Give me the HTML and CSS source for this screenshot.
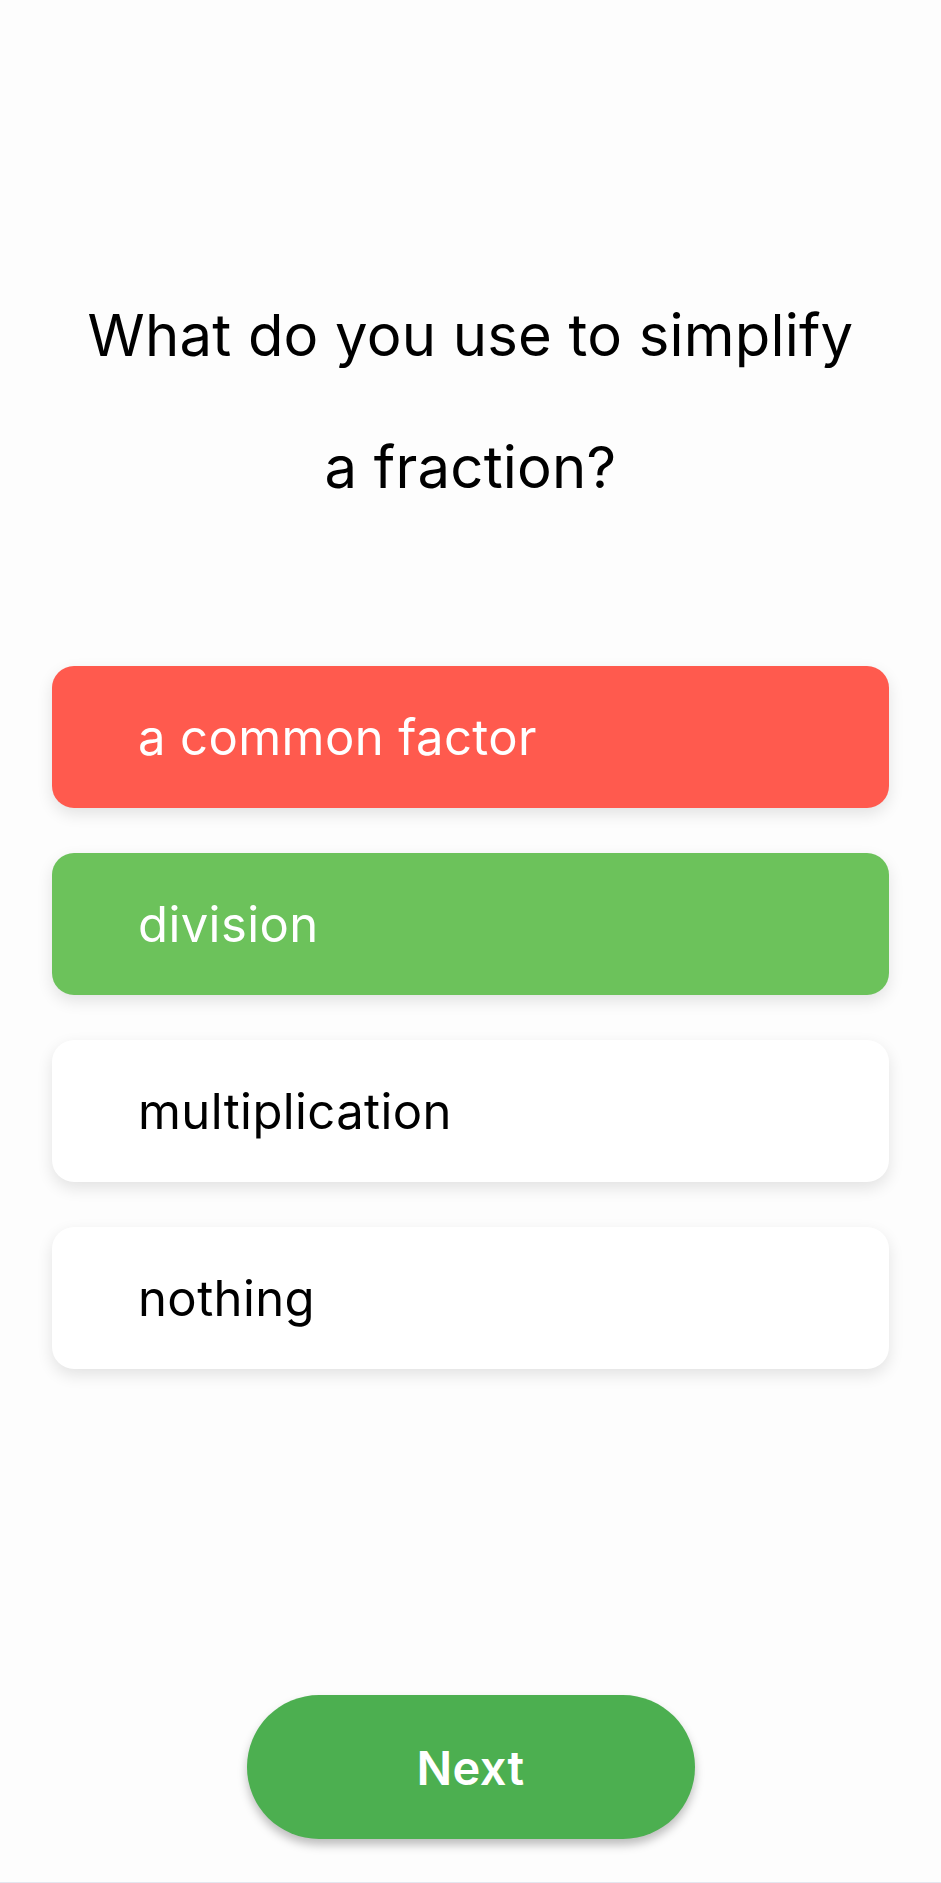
FILE: index.html
```html
<!DOCTYPE html>
<html lang="en">
<head>
<meta charset="utf-8">
<title>Quiz</title>
<link rel="stylesheet" href="styles.css">
</head>
<body>
<main class="screen">
  <h1 class="question">What do you use to simplify<br>a fraction?</h1>
  <ul class="options">
    <li class="option option--wrong">a common factor</li>
    <li class="option option--right">division</li>
    <li class="option">multiplication</li>
    <li class="option">nothing</li>
  </ul>
  <div class="actions">
    <button class="next" type="button">Next</button>
  </div>
</main>
<div class="nav-edge"></div>
</body>
</html>
```

FILE: styles.css
```css
html, body {
  margin: 0;
  padding: 0;
  background: #fdfdfd;
}
body {
  font-family: "Inter", "Open Sans", sans-serif;
  color: #000;
  width: 941px;
  height: 1883px;
  display: flex;
  flex-direction: column;
  overflow: hidden;
}
.screen {
  flex: 1;
  display: flex;
  flex-direction: column;
  padding: 269px 52px 0 52px;
}
.question {
  margin: 0;
  font-weight: 400;
  font-size: 58px;
  line-height: 132px;
  text-align: center;
  letter-spacing: 0.2px;
}
.options {
  list-style: none;
  margin: 133px 0 0 0;
  padding: 0;
  display: flex;
  flex-direction: column;
  gap: 45px;
}
.option {
  height: 142px;
  box-sizing: border-box;
  display: flex;
  align-items: center;
  padding-left: 86px;
  background: #ffffff;
  border-radius: 22px;
  font-size: 49px;
  letter-spacing: 0.4px;
  box-shadow: 0 6px 16px rgba(0, 0, 0, 0.11);
}
.option--wrong {
  background: #ff5a4e;
  color: #fff;
}
.option--right {
  background: #6cc25b;
  color: #fff;
}
.actions {
  display: flex;
  justify-content: center;
  margin-top: 326px;
}
.next {
  width: 448px;
  height: 144px;
  border: none;
  border-radius: 72px;
  background: #4caf50;
  color: #fff;
  font-family: "Inter", "Open Sans", sans-serif;
  font-weight: 600;
  font-size: 47px;
  letter-spacing: 0.3px;
  box-shadow: 0 6px 10px rgba(0, 0, 0, 0.25);
}
.nav-edge {
  height: 1px;
  background: #e4e6ee;
}
```
